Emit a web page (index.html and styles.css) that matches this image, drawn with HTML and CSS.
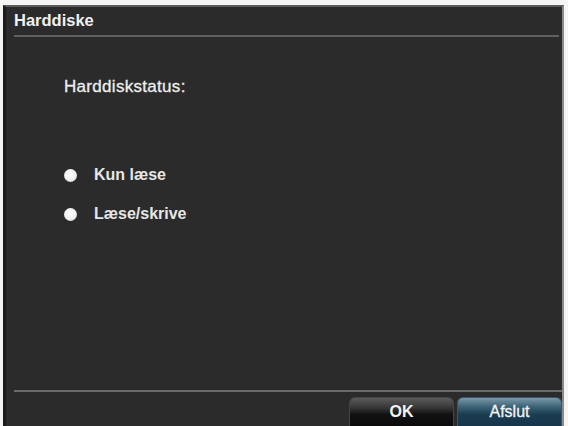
FILE: index.html
```html
<!DOCTYPE html>
<html>
<head>
<meta charset="utf-8">
<link rel="stylesheet" href="styles.css">
</head>
<body>
<div class="dialog">
  <div class="title">Harddiske</div>
  <div class="content">
    <div class="status">Harddiskstatus:</div>
    <div class="options">
      <label class="opt"><span class="radio"></span>Kun læse</label>
      <label class="opt"><span class="radio"></span>Læse/skrive</label>
    </div>
  </div>
  <div class="footer">
    <div class="btn ok">OK</div>
    <div class="btn exit">Afslut</div>
  </div>
</div>
</body>
</html>
```
FILE: styles.css
```css
html, body {
  margin: 0;
  padding: 0;
  background: #f4f4f4;
  width: 568px;
  height: 426px;
  overflow: hidden;
}
body {
  padding: 5px 4px 0 3px;
  box-sizing: border-box;
  font-family: "Liberation Sans", Arial, sans-serif;
}
.dialog {
  height: 421px;
  background: #2b2b2b;
  border-top: 2px solid #5a5a5a;
  border-left: 3px solid #1c1c1c;
  border-right: 2px solid #8a8a8a;
  box-sizing: border-box;
  display: flex;
  flex-direction: column;
  color: #eeeeee;
}
.title {
  margin: 0 3px 0 8px;
  padding: 5px 0 6px 0;
  font-size: 16.5px;
  font-weight: bold;
  color: #f0f0f0;
  border-bottom: 2px solid #606060;
  line-height: 17px;
}
.content {
  flex: 1;
  padding: 41px 0 0 58px;
}
.status {
  font-size: 17px;
  letter-spacing: 0.3px;
  line-height: 18px;
  -webkit-text-stroke: 0.3px #eeeeee;
}
.options {
  margin-top: 70px;
  display: flex;
  flex-direction: column;
  gap: 21px;
}
.opt {
  display: flex;
  align-items: center;
  font-size: 16px;
  font-weight: bold;
  line-height: 18px;
  color: #e6e6e6;
}
.radio {
  width: 13px;
  height: 13px;
  border-radius: 50%;
  background: radial-gradient(circle at 45% 40%, #ffffff 0%, #f0f0f0 55%, #bbbbbb 100%);
  margin-right: 17px;
  flex: none;
}
.footer {
  margin: 0 0 0 8px;
  border-top: 2px solid #6a6a6a;
  padding-top: 5px;
  display: flex;
  justify-content: flex-end;
  gap: 3px;
  height: 29px;
}
.btn {
  width: 105px;
  height: 32px;
  border-radius: 6px 6px 0 0;
  display: flex;
  justify-content: center;
  padding-top: 5px;
  box-sizing: border-box;
  font-size: 16px;
  font-weight: bold;
  color: #f4f4f4;
}
.ok {
  background: linear-gradient(#5a5a5a 0%, #3a3a3a 30%, #111111 55%, #0a0a0a 100%);
  border: 1px solid #444;
}
.exit {
  background: linear-gradient(#7a99a8 0%, #3b6275 30%, #1b3d50 55%, #16334a 100%);
  border: 1px solid #3a5566;
  font-weight: normal;
  font-size: 16px;
  -webkit-text-stroke: 0.3px #f4f4f4;
}
```
